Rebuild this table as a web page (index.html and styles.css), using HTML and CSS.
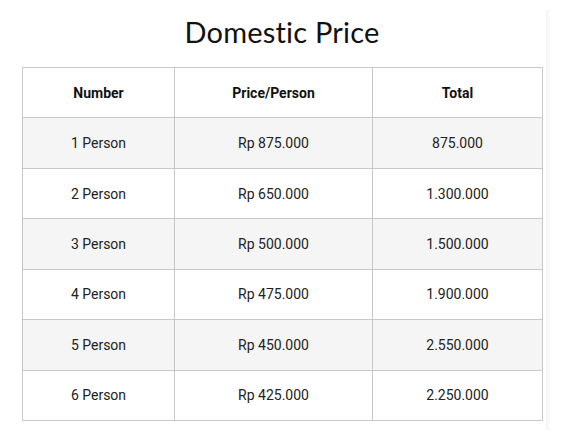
FILE: index.html
```html
<!DOCTYPE html>
<html lang="id">
<head>
<meta charset="utf-8">
<title>Domestic Price</title>
<link rel="stylesheet" href="styles.css">
</head>
<body>
<div class="page">
  <main class="content">
    <h1 class="title">Domestic Price</h1>
    <table class="price-table">
      <colgroup>
        <col class="c1"><col class="c2"><col class="c3">
      </colgroup>
      <thead>
        <tr><th>Number</th><th>Price/Person</th><th>Total</th></tr>
      </thead>
      <tbody>
        <tr><td>1 Person</td><td>Rp 875.000</td><td>875.000</td></tr>
        <tr><td>2 Person</td><td>Rp 650.000</td><td>1.300.000</td></tr>
        <tr><td>3 Person</td><td>Rp 500.000</td><td>1.500.000</td></tr>
        <tr><td>4 Person</td><td>Rp 475.000</td><td>1.900.000</td></tr>
        <tr><td>5 Person</td><td>Rp 450.000</td><td>2.550.000</td></tr>
        <tr><td>6 Person</td><td>Rp 425.000</td><td>2.250.000</td></tr>
      </tbody>
    </table>
  </main>
  <div class="edge"></div>
</div>
</body>
</html>
```
FILE: styles.css
```css
html, body {
  margin: 0;
  padding: 0;
  background: #fff;
}
.page {
  display: flex;
  align-items: flex-start;
}
.content {
  width: 520px;
  padding: 0 4px 0 22px;
}
.title {
  margin: 15px 0 18px;
  font-family: Lato, "Liberation Sans", sans-serif;
  font-weight: normal;
  font-size: 29px;
  line-height: 34px;
  text-align: center;
  color: #111;
  letter-spacing: 0.2px;
}
.price-table {
  width: 520px;
  border-collapse: collapse;
  table-layout: fixed;
  font-family: Roboto, "Liberation Sans", sans-serif;
  font-size: 14px;
  color: #222;
}
.c1 { width: 152px; }
.c2 { width: 198px; }
.c3 { width: 170px; }
.price-table th,
.price-table td {
  border: 1px solid #c8c8c8;
  height: 49.45px;
  padding: 0;
  text-align: center;
  vertical-align: middle;
}
.price-table th {
  font-weight: bold;
  color: #111;
}
.price-table tbody tr:nth-child(odd) {
  background: #f5f5f5;
}
.edge {
  width: 4px;
  height: 420px;
  margin-top: 10px;
  background: linear-gradient(to right, #f3f3f3, #f8f8f8 50%, #fdfdfd);
}
```
